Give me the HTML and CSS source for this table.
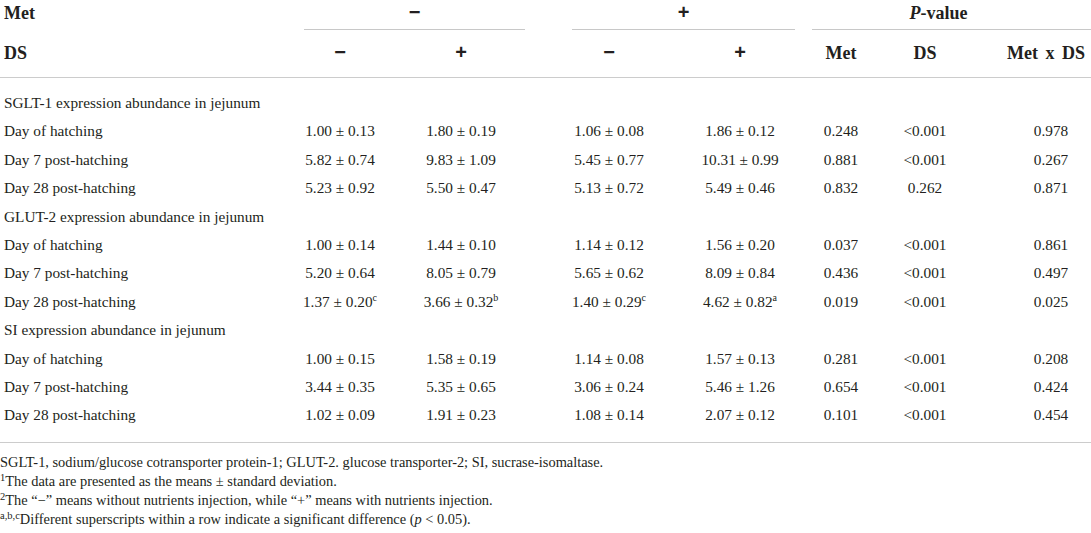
FILE: index.html
```html
<!DOCTYPE html>
<html lang="en">
<head>
  <meta charset="UTF-8">
  <meta name="viewport" content="width=device-width, initial-scale=1.0">
  <title>Table – nutrient injection and jejunal transporter expression</title>
  <link rel="stylesheet" href="styles.css">
</head>
<body>
  <table class="results">
    <colgroup>
      <col class="w-label">
      <col class="w-1">
      <col class="w-2">
      <col class="w-3">
      <col class="w-4">
      <col class="w-5">
      <col class="w-6">
      <col class="w-7">
    </colgroup>
    <thead>
      <tr class="row-group">
        <th class="label">Met</th>
        <th colspan="2" class="group g1"><span class="rule"><span class="sign">−</span></span></th>
        <th colspan="2" class="group g2"><span class="rule"><span class="sign">+</span></span></th>
        <th colspan="3" class="group g3"><span class="rule"><i>P</i>-value</span></th>
      </tr>
      <tr class="row-sub">
        <th class="label">DS</th>
        <th><span class="sign">−</span></th>
        <th><span class="sign">+</span></th>
        <th><span class="sign">−</span></th>
        <th class="col4"><span class="sign">+</span></th>
        <th>Met</th>
        <th>DS</th>
        <th class="col7 inter">Met x DS</th>
      </tr>
    </thead>
    <tbody>
      <tr class="section first">
        <td colspan="8" class="label">SGLT-1 expression abundance in jejunum</td>
      </tr>
      <tr>
        <td class="label">Day of hatching</td>
        <td>1.00 ± 0.13</td><td>1.80 ± 0.19</td><td>1.06 ± 0.08</td><td class="col4">1.86 ± 0.12</td>
        <td>0.248</td><td>&lt;0.001</td><td class="col7">0.978</td>
      </tr>
      <tr>
        <td class="label">Day 7 post-hatching</td>
        <td>5.82 ± 0.74</td><td>9.83 ± 1.09</td><td>5.45 ± 0.77</td><td class="col4">10.31 ± 0.99</td>
        <td>0.881</td><td>&lt;0.001</td><td class="col7">0.267</td>
      </tr>
      <tr>
        <td class="label">Day 28 post-hatching</td>
        <td>5.23 ± 0.92</td><td>5.50 ± 0.47</td><td>5.13 ± 0.72</td><td class="col4">5.49 ± 0.46</td>
        <td>0.832</td><td>0.262</td><td class="col7">0.871</td>
      </tr>

      <tr class="section">
        <td colspan="8" class="label">GLUT-2 expression abundance in jejunum</td>
      </tr>
      <tr>
        <td class="label">Day of hatching</td>
        <td>1.00 ± 0.14</td><td>1.44 ± 0.10</td><td>1.14 ± 0.12</td><td class="col4">1.56 ± 0.20</td>
        <td>0.037</td><td>&lt;0.001</td><td class="col7">0.861</td>
      </tr>
      <tr>
        <td class="label">Day 7 post-hatching</td>
        <td>5.20 ± 0.64</td><td>8.05 ± 0.79</td><td>5.65 ± 0.62</td><td class="col4">8.09 ± 0.84</td>
        <td>0.436</td><td>&lt;0.001</td><td class="col7">0.497</td>
      </tr>
      <tr>
        <td class="label">Day 28 post-hatching</td>
        <td>1.37 ± 0.20<sup class="mark">c</sup></td>
        <td>3.66 ± 0.32<sup class="mark">b</sup></td>
        <td>1.40 ± 0.29<sup class="mark">c</sup></td>
        <td class="col4">4.62 ± 0.82<sup class="mark">a</sup></td>
        <td>0.019</td><td>&lt;0.001</td><td class="col7">0.025</td>
      </tr>

      <tr class="section">
        <td colspan="8" class="label">SI expression abundance in jejunum</td>
      </tr>
      <tr>
        <td class="label">Day of hatching</td>
        <td>1.00 ± 0.15</td><td>1.58 ± 0.19</td><td>1.14 ± 0.08</td><td class="col4">1.57 ± 0.13</td>
        <td>0.281</td><td>&lt;0.001</td><td class="col7">0.208</td>
      </tr>
      <tr>
        <td class="label">Day 7 post-hatching</td>
        <td>3.44 ± 0.35</td><td>5.35 ± 0.65</td><td>3.06 ± 0.24</td><td class="col4">5.46 ± 1.26</td>
        <td>0.654</td><td>&lt;0.001</td><td class="col7">0.424</td>
      </tr>
      <tr class="last">
        <td class="label">Day 28 post-hatching</td>
        <td>1.02 ± 0.09</td><td>1.91 ± 0.23</td><td>1.08 ± 0.14</td><td class="col4">2.07 ± 0.12</td>
        <td>0.101</td><td>&lt;0.001</td><td class="col7">0.454</td>
      </tr>
    </tbody>
  </table>

  <div class="notes">
    <p>SGLT-1, sodium/glucose cotransporter protein-1; GLUT-2. glucose transporter-2; SI, sucrase-isomaltase.</p>
    <p><sup>1</sup>The data are presented as the means ± standard deviation.</p>
    <p><sup>2</sup>The “−” means without nutrients injection, while “+” means with nutrients injection.</p>
    <p><sup>a,b,c</sup>Different superscripts within a row indicate a significant difference (<i>p</i> &lt; 0.05).</p>
  </div>
</body>
</html>
```

FILE: styles.css
```css
body {
  font-family: "Liberation Serif", "Times New Roman", serif;
  color: #231f20;
  margin: 0;
  width: 1091px;
}

.results {
  width: 1091px;
  table-layout: fixed;
  border-collapse: collapse;
  font-size: 15.3px;
}
.w-label { width: 283px; }
.w-1 { width: 114px; }
.w-2 { width: 128px; }
.w-3 { width: 168px; }
.w-4 { width: 102px; }
.w-5 { width: 92px; }
.w-6 { width: 76px; }
.w-7 { width: 128px; }

.results th,
.results td {
  padding: 0;
  text-align: center;
  white-space: nowrap;
  vertical-align: top;
}
.results .label {
  text-align: left;
  padding-left: 4px;
}
.results .col4 { padding-right: 8px; }
.results .col7 { padding-left: 48px; }

/* header */
.results th {
  font-size: 18px;
  font-weight: bold;
  line-height: 26px;
}
.results th.col7 { padding-left: 38px; }
.sign {
  font-family: "Liberation Sans", Arial, sans-serif;
  font-size: 20px;
  line-height: 1;
}
.row-group th { height: 30px; }
.rule {
  display: block;
  height: 26px;
  padding-bottom: 3px;
  border-bottom: 1px solid #c8c8c8;
}
.g1 .rule { margin-left: 21px; }
.g2 .rule { margin-left: 47px; }
.g3 .rule {
  margin-left: 17px;
  padding-right: 26px;
}

.row-sub th {
  height: 26px;
  padding-top: 10px;
  padding-bottom: 11px;
  border-bottom: 1px solid #cccccc;
}
.inter { word-spacing: 3px; }

/* body */
.results td { line-height: 28.4px; }
.results .first td { padding-top: 11px; }
.results .last td {
  padding-bottom: 12px;
  border-bottom: 1px solid #cccccc;
}
.mark {
  font-size: 10px;
  line-height: 0;
  vertical-align: 6px;
}

.notes {
  margin-top: 10px;
  font-size: 14.4px;
  line-height: 19px;
}
.notes p { margin: 0; }
.notes sup {
  font-size: 10.5px;
  line-height: 0;
  vertical-align: 5px;
}
```
